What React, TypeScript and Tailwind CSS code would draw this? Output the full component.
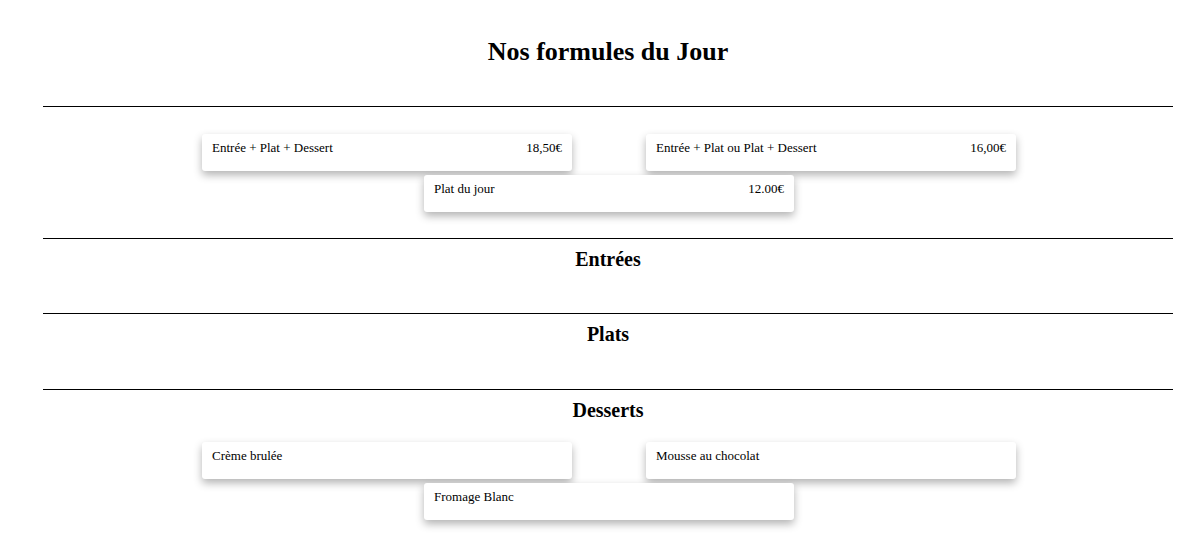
import React from 'react';

type Item = { name: string; price?: string };

const formules: Item[] = [
  { name: 'Entrée + Plat + Dessert', price: '18,50€' },
  { name: 'Entrée + Plat ou Plat + Dessert', price: '16,00€' },
  { name: 'Plat du jour', price: '12.00€' },
];

const desserts: Item[] = [
  { name: 'Crème brulée' },
  { name: 'Mousse au chocolat' },
  { name: 'Fromage Blanc' },
];

const serif = { fontFamily: 'Georgia, "Liberation Serif", serif' };

const Card: React.FC<{ item: Item }> = ({ item }) => (
  <div className="w-[370px] h-[37px] mx-[37px] bg-white rounded-[3px] shadow-[0_4px_8px_rgba(0,0,0,0.3)] flex justify-between px-[10px] pt-[6px] text-[13px] leading-[16px] text-black">
    <span>{item.name}</span>
    {item.price && <span>{item.price}</span>}
  </div>
);

const CardGrid: React.FC<{ items: Item[] }> = ({ items }) => (
  <div className="flex flex-wrap justify-center gap-y-[4px] pl-[2px]">
    {items.map(it => (
      <Card key={it.name} item={it} />
    ))}
  </div>
);

const Section: React.FC<{ title: string; items?: Item[]; gap?: string }> = ({ title, items, gap }) => (
  <section>
    <hr className="border-0 border-t border-black" />
    <h2 className="text-center font-bold text-[20px] leading-[24px] mt-[8px]">{title}</h2>
    {items ? (
      <div className="mt-[20px] pb-[20px]">
        <CardGrid items={items} />
      </div>
    ) : (
      <div className={gap} />
    )}
  </section>
);

export default function App() {
  return (
    <div className="min-h-screen bg-white text-black" style={serif}>
      <div className="ml-[43px] w-[1130px]">
        <h1 className="text-center font-bold text-[26px] leading-[32px] pt-[36px] pb-[38px]">Nos formules du Jour</h1>
        <hr className="border-0 border-t border-black" />
        <div className="pt-[27px] pb-[26px]">
          <CardGrid items={formules} />
        </div>
        <Section title="Entrées" gap="h-[42px]" />
        <Section title="Plats" gap="h-[43px]" />
        <Section title="Desserts" items={desserts} />
      </div>
    </div>
  );
}
